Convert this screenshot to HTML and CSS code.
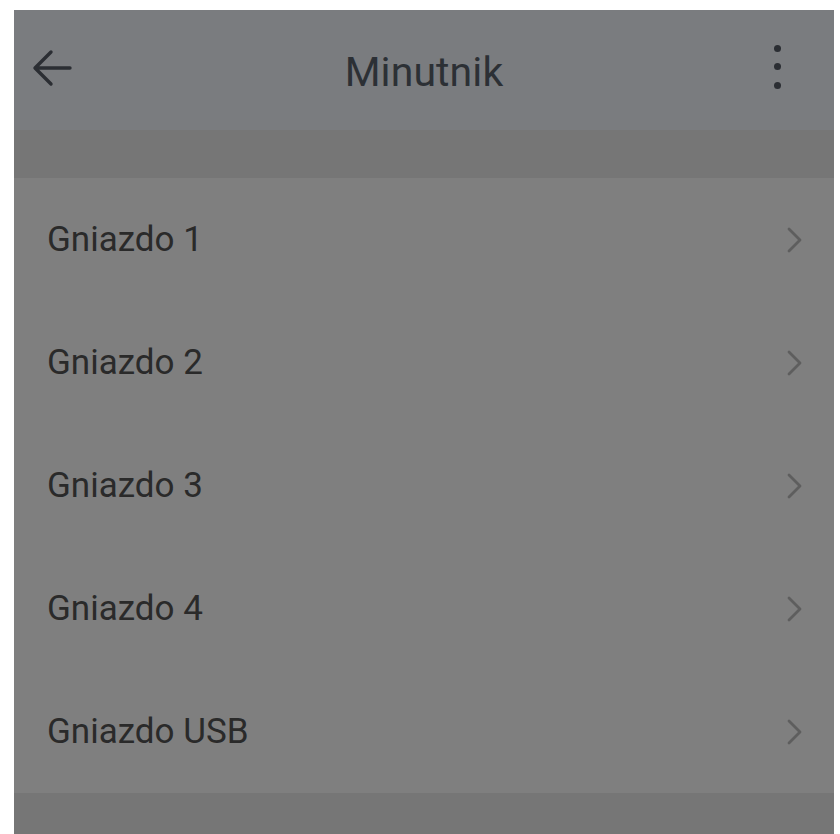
FILE: index.html
```html
<!DOCTYPE html>
<html lang="pl">
<head>
<meta charset="utf-8">
<title>Minutnik</title>
<link rel="stylesheet" href="styles.css">
</head>
<body>
<div class="screen">
  <header class="appbar">
    <div class="appbar-left">
      <svg class="back" width="40" height="38" viewBox="0 0 40 38" aria-hidden="true">
        <path d="M38 19 H4 M19 3 L3 19 L19 35" fill="none" stroke="#2b2e33" stroke-width="3.4" stroke-linecap="round" stroke-linejoin="round"/>
      </svg>
    </div>
    <h1 class="title">Minutnik</h1>
    <div class="appbar-right">
      <div class="dots"><span></span><span></span><span></span></div>
    </div>
  </header>
  <div class="band"></div>
  <ul class="list">
    <li class="row"><span class="label">Gniazdo 1</span><svg class="chev" width="18" height="28" viewBox="0 0 18 28"><path d="M4 3 L15 14 L4 25" fill="none" stroke="#5e5e5e" stroke-width="2.8" stroke-linecap="round" stroke-linejoin="round"/></svg></li>
    <li class="row"><span class="label">Gniazdo 2</span><svg class="chev" width="18" height="28" viewBox="0 0 18 28"><path d="M4 3 L15 14 L4 25" fill="none" stroke="#5e5e5e" stroke-width="2.8" stroke-linecap="round" stroke-linejoin="round"/></svg></li>
    <li class="row"><span class="label">Gniazdo 3</span><svg class="chev" width="18" height="28" viewBox="0 0 18 28"><path d="M4 3 L15 14 L4 25" fill="none" stroke="#5e5e5e" stroke-width="2.8" stroke-linecap="round" stroke-linejoin="round"/></svg></li>
    <li class="row"><span class="label">Gniazdo 4</span><svg class="chev" width="18" height="28" viewBox="0 0 18 28"><path d="M4 3 L15 14 L4 25" fill="none" stroke="#5e5e5e" stroke-width="2.8" stroke-linecap="round" stroke-linejoin="round"/></svg></li>
    <li class="row"><span class="label">Gniazdo USB</span><svg class="chev" width="18" height="28" viewBox="0 0 18 28"><path d="M4 3 L15 14 L4 25" fill="none" stroke="#5e5e5e" stroke-width="2.8" stroke-linecap="round" stroke-linejoin="round"/></svg></li>
  </ul>
  <div class="footer-band"></div>
</div>
</body>
</html>
```
FILE: styles.css
```css
html, body {
  margin: 0;
  padding: 0;
  background: #ffffff;
}
body {
  padding: 10px 6px 0 14px;
  height: 834px;
  box-sizing: border-box;
  overflow: hidden;
  font-family: Roboto, "Noto Sans", "Liberation Sans", sans-serif;
}
.screen {
  width: 820px;
  height: 824px;
  display: flex;
  flex-direction: column;
  background: #767676;
  overflow: hidden;
}
.appbar {
  flex: 0 0 120px;
  display: grid;
  grid-template-columns: 1fr auto 1fr;
  align-items: center;
  background: #7a7c7f;
}
.appbar-left {
  padding-left: 18px;
  display: flex;
  align-items: center;
}
.back {
  display: block;
  margin-top: -4px;
}
.title {
  margin: 0;
  font-weight: 400;
  font-size: 41px;
  color: #2c3035;
  letter-spacing: 0.1px;
  line-height: 1;
  padding-top: 4px;
}
.appbar-right {
  display: flex;
  justify-content: flex-end;
  padding-right: 53px;
}
.dots {
  display: flex;
  flex-direction: column;
  gap: 11.5px;
  margin-top: -7px;
}
.dots span {
  display: block;
  width: 7px;
  height: 7px;
  border-radius: 50%;
  background: #2b2e33;
}
.band {
  flex: 0 0 48px;
  background: #767676;
}
.list {
  list-style: none;
  margin: 0;
  padding: 0;
  background: #7f7f7f;
}
.row {
  height: 123px;
  display: flex;
  align-items: center;
  justify-content: space-between;
  padding: 0 31px 0 33px;
}
.label {
  font-size: 35px;
  color: #2a2a2a;
  line-height: 1;
}
.chev {
  display: block;
}
.footer-band {
  flex: 1 1 auto;
  background: #767676;
}
```
